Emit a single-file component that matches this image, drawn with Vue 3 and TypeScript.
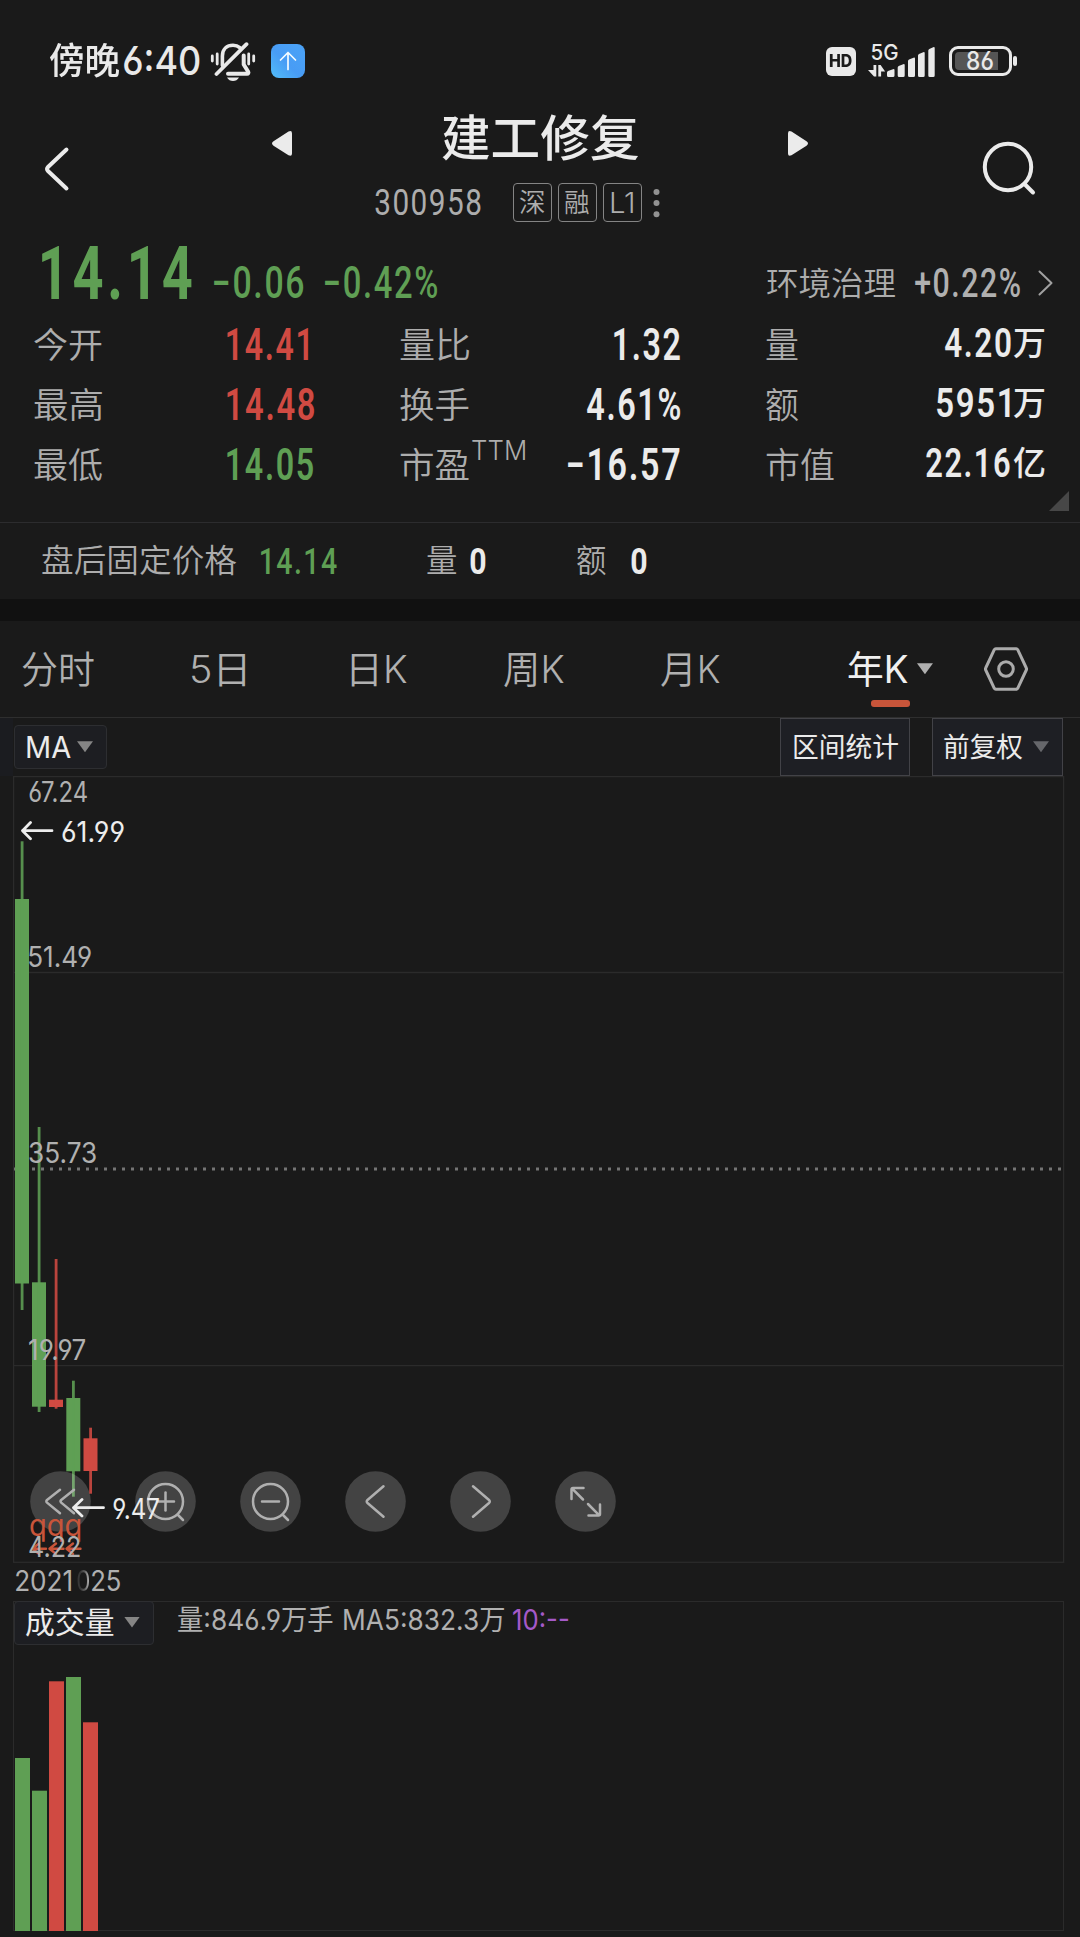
<script setup lang="ts">
import type { Directive } from 'vue'

/* Scales a run of text horizontally so that its drawn glyphs span the given width in px. */
const vFit: Directive<HTMLElement, number> = {
  mounted(el, binding) {
    const cs = getComputedStyle(el)
    const ctx = document.createElement('canvas').getContext('2d')
    if (!ctx) return
    ctx.font = `${cs.fontWeight} ${cs.fontSize} ${cs.fontFamily}`
    const text = (el.textContent ?? '').trim()
    const m = ctx.measureText(text)
    const spacing = (parseFloat(cs.letterSpacing) || 0) * (text.length - 1)
    const ink = m.actualBoundingBoxLeft + m.actualBoundingBoxRight + spacing
    const k = binding.value / ink
    const natural = el.getBoundingClientRect().width
    el.style.transformOrigin = '0 50%'
    el.style.transform = `translateX(${m.actualBoundingBoxLeft * k}px) scaleX(${k})`
    el.style.marginRight = `${binding.value - natural}px`
  },
}

interface Candle { x: number; top: number; bottom: number; high: number; low: number; up: boolean; vol: number }

const candles: Candle[] = [
  { x: 15, top: 899, bottom: 1283.5, high: 841.3, low: 1310, up: false, vol: 1758 },
  { x: 32, top: 1282.3, bottom: 1406.7, high: 1127, low: 1412, up: false, vol: 1790.7 },
  { x: 49, top: 1399.7, bottom: 1407, high: 1259, low: 1408.7, up: true, vol: 1681.3 },
  { x: 66.3, top: 1398, bottom: 1471.3, high: 1380.7, low: 1496.7, up: false, vol: 1677 },
  { x: 83.5, top: 1438.3, bottom: 1471, high: 1427.7, low: 1493.7, up: true, vol: 1722.3 },
]

const axis = [
  { t: '67.24', w: 60, y: 792 },
  { t: '51.49', w: 64, y: 956.7 },
  { t: '35.73', w: 67, y: 1152.7 },
  { t: '19.97', w: 62, y: 1350 },
  { t: '4.22', w: 51.5, y: 1546.7 },
]

const quotes = [
  { a: '今开', av: '14.41', aw: 81, up: true, b: '量比', bv: '1.32', bw: 66.3, c: '量', cl: 32, cv: '4.20', cw: 65.5, u: '万' },
  { a: '最高', av: '14.48', aw: 87, up: true, b: '换手', bv: '4.61%', bw: 93.5, c: '额', cl: 32, cv: '5951', cw: 73, u: '万' },
  { a: '最低', av: '14.05', aw: 86.5, up: false, b: '市盈', bv: '-16.57', bw: 112, c: '市值', cl: 68, cv: '22.16', cw: 84, u: '亿' },
]

const bars = [[887, 69, 7.5], [897.7, 64, 7], [908, 57.5, 7], [918, 52, 6.7], [928.3, 47, 6.4]]
const buttons = ['first', 'in', 'out', 'prev', 'next', 'full']
</script>

<template>
  <div class="app">
    <header class="status">
      <span v-fit="70" class="clock-zh">傍晚</span>
      <span v-fit="77" class="clock">6:40</span>
      <svg class="bell" width="46" height="40" viewBox="0 0 46 40" fill="none" stroke="#e9e9e9" stroke-linecap="round">
        <g stroke-width="2.8">
          <path d="M2.3 14v5M7.2 12v10M38.7 12v10M43.7 14v5" />
        </g>
        <path d="M12.4 23.5V14C12.4 7 17 3.2 23 3.2c3 0 5 .8 6.8 2.4" stroke-width="3.6" />
        <path d="M33.7 13.5v9l4.5 7.2c.6 1-.1 2.1-1.2 2.1H18" stroke-width="4" stroke-linejoin="round" />
        <path d="M6.500 32 36.500 2.200" stroke-width="3.8" />
        <path d="M17 35.600h12c-1.500 2.500-3.400 3.400-6 3.400s-4.500-.9-6-3.400z" fill="#e9e9e9" stroke="none" />
      </svg>
      <span class="up">
        <svg width="34" height="34" viewBox="0 0 34 34" fill="none" stroke="#f4fbff" stroke-width="1.700" stroke-linecap="round" stroke-linejoin="round"><path d="M17 25.500V8.500M9.500 16 17 8.500 24.500 16" /></svg>
      </span>
      <span class="hd"><b v-fit="23">HD</b></span>
      <svg class="signal" width="68" height="44" viewBox="868 39 68 44" fill="#e9e9e9">
        <text x="870.500" y="59.500" font-size="21" textLength="28" lengthAdjust="spacingAndGlyphs">5G</text>
        <path d="M873.500 65h2.800v11.500h-2.300l-6-6.500h5.500z M878.300 76.500V65h2.300l4.500 6.500h-4v5z" />
        <path v-for="b in bars" :key="b[0]" :d="`M${b[0]} 75.500V${b[1] + 3.500}q0-1 1-1.600l${b[2] - 2.500}-1.600q1.500-.7 1.500 1V75.500q0 1.500-1.500 1.500h-${b[2] - 3}q-1.500 0-1.500-1.500z`" />
      </svg>
      <span class="battery"><i class="level"></i><span v-fit="27" class="pct">86</span></span><i class="tip"></i>
    </header>

    <section class="head">
      <svg class="back" width="26" height="46" viewBox="0 0 26 46" fill="none" stroke="#ebebeb" stroke-width="4" stroke-linecap="round" stroke-linejoin="round"><path d="M22.500 3.500 4 21q-2 2 0 4l18.500 17.500" /></svg>
      <div class="mid">
        <div class="title-row">
          <svg class="tri" width="20" height="25" viewBox="0 0 20 25" fill="#ebebeb"><path d="M1.500 10.300 16.500.6Q20-1 20 2.500v20q0 3.300-3.500 1.800L1.500 14.700q-3-2.200 0-4.400z" /></svg>
          <h1 v-fit="196.500">建工修复</h1>
          <svg class="tri" width="20" height="25" viewBox="0 0 20 25" fill="#ebebeb"><path d="M18.500 10.300 3.500.6Q0-1 0 2.500v20q0 3.300 3.500 1.800l15-9.600q3-2.200 0-4.400z" /></svg>
        </div>
        <div class="code-row">
          <span v-fit="106" class="din code">300958</span>
          <span class="tag"><span v-fit="24.500">深</span></span>
          <span class="tag"><span v-fit="24.500">融</span></span>
          <span class="tag l1"><span v-fit="22.500">L1</span></span>
          <svg width="7" height="30" viewBox="0 0 7 30" fill="#929292"><circle cx="3.500" cy="4" r="3" /><circle cx="3.500" cy="15" r="3" /><circle cx="3.500" cy="26.300" r="3" /></svg>
        </div>
      </div>
      <svg class="search" width="56" height="56" viewBox="0 0 56 56" fill="none" stroke="#ebebeb" stroke-width="4" stroke-linecap="round"><circle cx="27" cy="27" r="23.200" /><path d="m44 44.500 8 8" /></svg>
    </section>

    <section class="price">
      <span v-fit="149.500" class="din last down">14.14</span>
      <span v-fit="90" class="din chg down chg1">−0.06</span>
      <span v-fit="112.500" class="din chg down">−0.42%</span>
      <span v-fit="128" class="sector">环境治理</span>
      <span v-fit="105" class="din sector-v">+0.22%</span>
      <svg width="15" height="27" viewBox="0 0 15 27" fill="none" stroke="#a0a0a0" stroke-width="2" stroke-linecap="round" stroke-linejoin="round"><path d="m1.500 1.500 12 11.500-12 11.500" /></svg>
    </section>

    <section class="quotes">
      <div v-for="q in quotes" :key="q.a" class="q-row">
        <span class="c1"><span v-fit="68" class="lab">{{ q.a }}</span></span>
        <span class="c2"><span v-fit="q.aw" class="din val" :class="q.up ? 'rise' : 'down'">{{ q.av }}</span></span>
        <span class="c3">
          <span class="pe"><span v-fit="69" class="lab">{{ q.b }}</span><span v-if="q.b === '市盈'" v-fit="53" class="ttm">TTM</span></span>
          <span v-fit="q.bw" class="din val">{{ q.bv.replace('-', '−') }}</span>
        </span>
        <span class="c4">
          <span v-fit="q.cl" class="lab">{{ q.c }}</span>
          <span class="amt"><span v-fit="q.cw" class="din val small">{{ q.cv }}</span><span v-fit="32" class="unit">{{ q.u }}</span></span>
        </span>
      </div>
      <i class="corner"></i>
    </section>

    <section class="after">
      <span v-fit="195" class="lab32">盘后固定价格</span>
      <span v-fit="76" class="din n38 down a1">14.14</span>
      <span v-fit="29.500" class="lab32 a2">量</span>
      <span v-fit="15.300" class="din n38 bold a3">0</span>
      <span v-fit="29.500" class="lab32 a4">额</span>
      <span v-fit="15.300" class="din n38 bold a5">0</span>
    </section>

    <nav class="tabs">
      <span class="t1"><span v-fit="72">分时</span></span>
      <span class="t2"><span v-fit="53.500">5日</span></span>
      <span class="t3"><span v-fit="56">日K</span></span>
      <span class="t4"><span v-fit="60">周K</span></span>
      <span class="t5"><span v-fit="59">月K</span></span>
      <span class="t6"><span v-fit="60">年K</span><i class="caret"></i><i class="under"></i></span>
      <svg width="44" height="44" viewBox="0 0 44 44" fill="none" stroke="#ababab" stroke-width="3" stroke-linejoin="round"><path d="M11.800 1.800h20.400q1 0 1.500.9l8.600 18.300q.5 1 0 2L33.700 41.300q-.5.900-1.500.9H11.800q-1 0-1.500-.9L1.700 23q-.5-1 0-2l8.600-18.300q.5-.9 1.500-.9z" /><circle cx="22" cy="22" r="7.300" /></svg>
    </nav>

    <section class="tools">
      <span class="box ma"><span v-fit="43.500">MA</span><i class="caret grey"></i></span>
      <span class="box wide w1"><span v-fit="104">区间统计</span></span>
      <span class="box wide w2"><span v-fit="79">前复权</span><i class="caret dim"></i></span>
    </section>

    <section class="chart">
      <svg class="plot" width="1080" height="788" viewBox="0 776 1080 788">
        <g stroke="#2b2b2b" stroke-width="1.300" fill="none">
          <rect x="13.600" y="776.600" width="1050" height="785.700" />
          <path d="M14 972.500H1063M14 1365.700H1063" />
        </g>
        <path d="M14 1169H1063" stroke="#747474" stroke-width="3" stroke-dasharray="3 6" />
        <g v-for="c in candles" :key="c.x" :fill="c.up ? '#d04a42' : '#5f9f54'">
          <rect :x="c.x" :y="c.top" width="14" :height="c.bottom - c.top" />
          <rect :x="c.x + 5.700" :y="c.high" width="2.800" :height="c.low - c.high" opacity=".88" />
        </g>
      </svg>
      <div class="btns">
        <svg v-for="b in buttons" :key="b" width="61" height="61" viewBox="-30.500 -30.500 61 61" fill="none" stroke="#b0b0b0" stroke-width="2.500" stroke-linecap="round" stroke-linejoin="round">
          <circle r="30.300" stroke="none" fill="#fff" fill-opacity=".18" />
          <path v-if="b === 'first'" d="M-.5-11.700-13.500-1.500q-1.300 1.300 0 2.600L-.5 11.700M13.500-11.700.7-1.500q-1.300 1.300 0 2.600l12.800 10.600" />
          <g v-if="b === 'in' || b === 'out'"><circle r="17.500" /><path d="M-8.500 0h17M12.500 13.500l5 5" /></g>
          <path v-if="b === 'in'" d="M0-9V9" />
          <path v-if="b === 'prev'" d="M8-15.300-8-1.500q-1.600 1.500 0 3L8 15.300" />
          <path v-if="b === 'next'" d="M-7.500-15.300 8.500-1.500q1.600 1.500 0 3L-7.500 15.300" />
          <path v-if="b === 'full'" d="M-14-2.500v-9.500q0-1.500 1.500-1.500h10.500M-12.800-12.300-2.500-2M2.500 2.500l10.300 10.300M3 14h10q1.500 0 1.500-1.500V3" />
        </svg>
      </div>
      <svg class="plot" width="1080" height="786" viewBox="0 776 1080 786" fill="none" stroke="#ededed" stroke-width="2.800" stroke-linecap="round" stroke-linejoin="round">
        <path d="M52 830.700H22.500M30.500 822.500 22.500 830.700l8 8M103.500 1507.700H73.500M82 1499.500l-8.500 8.200 8.500 8.200" />
        <path d="M46 1548.700H33M39 1543.500l-6.500 5.200 6.500 5.200M63.500 1548.700H49.500M56 1543.500l-6.500 5.200 6.500 5.200M80.500 1548.700H67M73 1543.500l-6.500 5.200 6.500 5.200" stroke="#c8553a" stroke-width="2.400" />
      </svg>
      <span class="at qqq" style="left: 30px; top: 734px"><span v-fit="51">qqq</span></span>
      <span v-for="a in axis" :key="a.t" class="at" :style="{ left: '29.200px', top: a.y - 776 - 15 + 'px' }"><span v-fit="a.w">{{ a.t }}</span></span>
      <span class="at white" style="left: 62.300px; top: 41px"><span v-fit="66">61.99</span></span>
      <span class="at white" style="left: 112.700px; top: 717.700px"><span v-fit="49">9.47</span></span>
    </section>

    <section class="dates">
      <span v-fit="55">2021</span>
      <span v-fit="12" class="cut">0</span>
      <span v-fit="28.500" class="d25">25</span>
    </section>

    <section class="volume">
      <div class="v-head">
        <span class="box vol"><span v-fit="87.500">成交量</span><i class="caret grey"></i></span>
        <span v-fit="157" class="v1">量:846.9万手</span>
        <span v-fit="160.500" class="v2">MA5:832.3万</span>
        <span v-fit="55" class="v3">10:--</span>
      </div>
      <svg class="vbars" width="100" height="256" viewBox="0 1675 100 256">
        <rect v-for="(c, i) in candles" :key="c.x" :x="15 + i * 17" :y="c.vol" width="15" :height="1931 - c.vol" :fill="c.up ? '#d04a42' : '#5f9f54'" />
      </svg>
    </section>
  </div>
</template>

<style>
body { background: #1a1a1a; }
</style>

<style scoped>
* { box-sizing: border-box; }
.app {
  width: 1080px; height: 1937px; overflow: hidden; background: #1a1a1a; color: #ebebeb;
  font-family: Inter, "Noto Sans CJK SC", sans-serif; font-feature-settings: "cv03", "cv04";
}
.app span { white-space: nowrap; }
span { display: inline-block; flex: none; line-height: 1; }
svg, i { display: block; flex: none; }
.din { font-family: Roboto, "Noto Sans CJK SC", sans-serif; font-weight: 500; line-height: .711; letter-spacing: .05em; }
.down { color: #5f9f54 !important; }
.rise { color: #d04a42 !important; }

.status { display: flex; align-items: center; height: 94px; padding: 28px 0 0 49px; color: #e9e9e9; }
.clock-zh { font-size: 36px; font-weight: 500; }
.clock { font-size: 40px; font-weight: 500; margin-left: 4.500px; }
.bell { margin: 2px 0 0 9.500px; }
.up { width: 34px; height: 34px; border-radius: 8px; margin-left: 14.500px; background: linear-gradient(45deg, #52bdf8, #489cf5 45%, #4ba3f7); }
.hd { width: 30px; height: 29px; border-radius: 6px; background: #e9e9e9; color: #1a1a1a; margin-left: 521px; display: flex; align-items: center; padding-left: 3.500px; }
.hd b { font-size: 17px; font-weight: 800; line-height: 1; }
.signal { margin-left: 12px; font-weight: 500; overflow: visible; }
.battery { width: 63px; height: 30px; border: 3px solid #e9e9e9; border-radius: 9px; margin-left: 13px; display: flex; align-items: center; padding-left: 15px; position: relative; }
.level { position: absolute; left: 3.500px; top: 3px; width: 43px; height: 18px; background: #555; border-radius: 4px 0 0 4px; }
.pct { font-size: 25px; font-weight: 500; position: relative; }
.tip { width: 4px; height: 10px; border-radius: 2px; background: #e9e9e9; margin-left: 1.500px; }

.head { display: flex; height: 142px; padding-left: 44px; }
.back { margin-top: 51.500px; }
.mid { width: 536px; margin-left: 202px; }
.title-row { display: flex; justify-content: space-between; align-items: center; height: 58px; margin-top: 15px; }
.tri { margin-top: 10px; }
h1 { margin: 0; font-size: 49px; font-weight: 500; line-height: 1; white-space: nowrap; }
.code-row { display: flex; align-items: center; height: 39px; margin-top: 16px; padding-left: 103px; }
.code { font-size: 36px; font-weight: 400; color: #adadad; padding-top: 2px; }
.code + .tag { margin-left: 32px; }
.tag { width: 39px; height: 39px; border: 1.300px solid #848484; border-radius: 4px; display: flex; align-items: center; padding-left: 6px; font-size: 26px; font-weight: 350; color: #adadad; margin-right: 6px; }
.tag.l1 { font-size: 28px; margin-right: 11px; padding-left: 7px; }
.search { margin: 46px 0 0 172.500px; }

.price { display: flex; align-items: flex-end; height: 64.500px; padding-left: 42.400px; }
.last { font-size: 74.500px; font-weight: 700; letter-spacing: .07em; }
.chg { font-size: 43.600px; margin-bottom: 1.300px; }
.chg1 { margin-left: 22.500px; }
.chg1 + .chg { margin-left: 21px; }
.sector { font-size: 32px; font-weight: 350; color: #adadad; margin: 0 0 1px 329px; }
.sector-v { font-size: 40px; color: #b0b0b0; margin: 0 0 2px 19.700px; }
.price svg { margin: 0 0 3.500px 18px; }

.quotes { position: relative; height: 221.500px; padding-top: 14.500px; }
.q-row { display: flex; align-items: center; height: 60px; padding-left: 34px; }
.lab { font-size: 35px; font-weight: 350; color: #adadad; }
.val { font-size: 43.600px; font-weight: 600; padding-top: 1.500px; }
.small { font-size: 40px; }
.c1 { width: 192.500px; }
.c2 { width: 173.500px; }
.c3, .c4 { display: flex; justify-content: space-between; align-items: center; }
.c3 { width: 280px; margin-right: 86px; }
.c4 { width: 279px; }
.pe { display: flex; }
.ttm { font-size: 27px; font-weight: 300; color: #adadad; margin: -10px 0 0 3px; }
.amt { display: flex; align-items: center; gap: 3px; margin-top: -2.500px; }
.unit { font-size: 33px; font-weight: 500; }
.corner { position: absolute; left: 1049px; top: 190.500px; width: 20px; height: 20px; background: #474747; clip-path: polygon(100% 0, 100% 100%, 0 100%); }
.q-row .lab { padding-top: 1.500px; }

.after { display: flex; align-items: center; height: 77px; border-top: 1px solid #2c2c2e; padding-left: 42.200px; }
.lab32 { font-size: 32px; font-weight: 350; color: #adadad; }
.n38 { font-size: 37.500px; }
.bold { font-weight: 700; }
.a1 { margin-left: 23.500px; }
.a2 { margin-left: 90px; }
.a3 { margin-left: 14px; }
.a4 { margin-left: 91px; }
.a5 { margin-left: 24.500px; }

.tabs { display: flex; align-items: center; height: 118.500px; border-top: 22px solid #111; border-bottom: 1.300px solid #2e2e2e; padding-left: 22.400px; font-size: 38px; font-weight: 350; color: #b0b0b0; }
.tabs span > span { padding-top: 1px; }
.t1 { width: 169.400px; }
.t2 { width: 159.200px; }
.t3 { width: 152.800px; }
.t4 { width: 157.200px; }
.t5 { width: 187px; }
.tabs .t6 { width: 136.500px; display: flex; align-items: center; color: #f0f0f0; font-weight: 400; position: relative; }
.caret { width: 16px; height: 11px; background: #b0b0b0; clip-path: polygon(0 0, 100% 0, 50% 100%); }
.t6 .caret { margin-left: 9px; }
.under { position: absolute; left: 23px; top: 51px; width: 39px; height: 6.600px; border-radius: 3px; background: #c8553a; }

.tools { display: flex; align-items: center; height: 58.500px; padding-left: 14px; background: linear-gradient(90deg, #1b1c20 13px, transparent 13px); }
.box { display: flex; align-items: center; border: 1px solid #2d2e31; background: #1d1e22; border-radius: 4px; color: #ebebeb; }
.ma { width: 93px; height: 44px; padding-left: 12px; font-size: 30px; }
.grey { background: #858585; }
.dim { background: #66676b; }
.ma .caret { margin-left: 6.500px; }
.wide { height: 58px; border-radius: 0; border-color: #424247; background: #1e1f24; font-size: 27px; padding-left: 13px; }
.wide > span { padding-top: 1px; }
.w1 { width: 130px; margin-left: 673px; }
.w2 { width: 131px; margin-left: 22px; padding-left: 11px; }
.w2 .caret { margin-left: 10px; }

.chart { position: relative; height: 786px; }
.plot { position: absolute; left: 0; top: 0; }
.btns { position: absolute; left: 30px; top: 695px; display: flex; gap: 44px; }
.at { position: absolute; font-size: 28px; line-height: 30px; color: #b0b0b0; font-weight: 400; }
.at span { line-height: 30px; }
.white { color: #ededed; }
.qqq { color: #c8553a; font-size: 30px; }

.dates { display: flex; align-items: center; height: 39px; padding: 0 0 1.500px 16px; font-size: 28px; font-weight: 400; color: #b0b0b0; }
.cut { margin-left: 5.500px; color: transparent; background: linear-gradient(90deg, #383838 30%, #606060 60%, #aaa 85%); background-clip: text; -webkit-background-clip: text; }
.d25 { margin-left: 3px; }

.volume { width: 1051px; height: 330px; margin-left: 13px; border: 1.300px solid #2b2b2b; display: flex; flex-direction: column; justify-content: space-between; }
.v-head { display: flex; align-items: flex-start; font-size: 28px; font-weight: 400; color: #b0b0b0; }
.vol { width: 140px; height: 44px; padding: 0 0 2px 10.500px; font-size: 30px; font-weight: 400; margin-top: -1px; }
.vol .caret { margin-left: 11px; }
.v1 { margin: 4px 0 0 23.500px; }
.v2 { margin: 4px 0 0 9px; }
.v3 { margin: 4px 0 0 9px; color: #a559c8; }
.vbars { margin: 0 0 -1px -14px; }
</style>
